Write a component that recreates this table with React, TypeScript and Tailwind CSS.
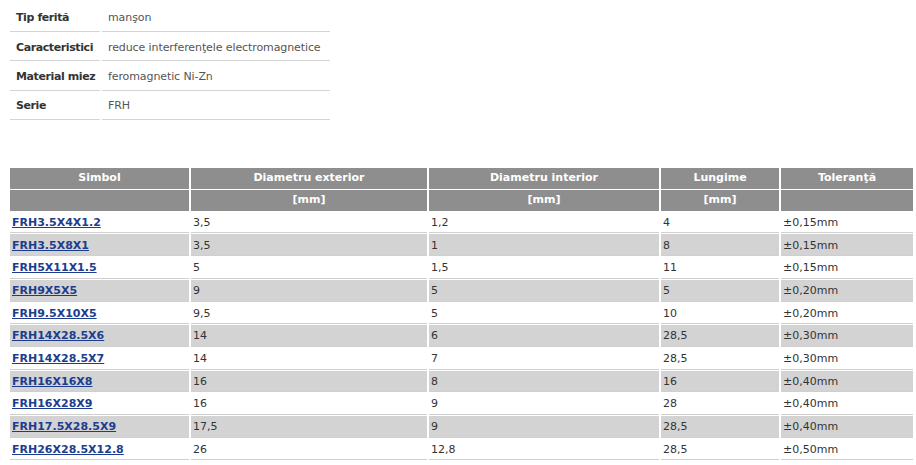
const specs = [
  { label: "Tip ferită", value: "manşon" },
  { label: "Caracteristici", value: "reduce interferenţele electromagnetice" },
  { label: "Material miez", value: "feromagnetic Ni-Zn" },
  { label: "Serie", value: "FRH" },
];

const rows = [
  ["FRH3.5X4X1.2", "3,5", "1,2", "4", "±0,15mm"],
  ["FRH3.5X8X1", "3,5", "1", "8", "±0,15mm"],
  ["FRH5X11X1.5", "5", "1,5", "11", "±0,15mm"],
  ["FRH9X5X5", "9", "5", "5", "±0,20mm"],
  ["FRH9.5X10X5", "9,5", "5", "10", "±0,20mm"],
  ["FRH14X28.5X6", "14", "6", "28,5", "±0,30mm"],
  ["FRH14X28.5X7", "14", "7", "28,5", "±0,30mm"],
  ["FRH16X16X8", "16", "8", "16", "±0,40mm"],
  ["FRH16X28X9", "16", "9", "28", "±0,40mm"],
  ["FRH17.5X28.5X9", "17,5", "9", "28,5", "±0,40mm"],
  ["FRH26X28.5X12.8", "26", "12,8", "28,5", "±0,50mm"],
];

const cols = "grid grid-cols-[179px_236px_230px_118px_132px] gap-x-[2px]";

const App = () => {
  return (
    <div className="w-[916px] h-[465px] bg-white text-[11px] text-[#333] overflow-hidden font-['DejaVu_Sans',sans-serif]">
      <div className="pt-[3px] pl-[10px]">
        <div className="grid grid-cols-[90px_228px] gap-x-[2px] w-[320px]">
          {specs.map((s) => (
            <>
              <div
                key={s.label + "-l"}
                className="h-[29.2px] flex items-center pl-[6px] pt-[3px] font-bold border-b border-[#d4d4d4] tracking-[-0.4px]"
              >
                {s.label}
              </div>
              <div
                key={s.label + "-v"}
                className="h-[29.2px] flex items-center pl-[6px] pt-[3px] text-[#555] border-b border-[#d4d4d4] tracking-[-0.1px]"
              >
                {s.value}
              </div>
            </>
          ))}
        </div>
      </div>

      <div className="mt-[48px] ml-[10px] w-[903px]">
        <div className={`${cols} bg-white font-bold text-white`}>
          <div className="h-[21px] bg-[#8e8e8e] flex items-center justify-center">Simbol</div>
          <div className="h-[21px] bg-[#8e8e8e] flex items-center justify-center">Diametru exterior</div>
          <div className="h-[21px] bg-[#8e8e8e] flex items-center justify-center">Diametru interior</div>
          <div className="h-[21px] bg-[#8e8e8e] flex items-center justify-center">Lungime</div>
          <div className="h-[21px] bg-[#8e8e8e] flex items-center justify-center">Toleranţă</div>
        </div>
        <div className={`${cols} mt-px font-bold text-white`}>
          <div className="h-[21px] bg-[#8e8e8e]"></div>
          <div className="h-[21px] bg-[#8e8e8e] flex items-center justify-center">[mm]</div>
          <div className="h-[21px] bg-[#8e8e8e] flex items-center justify-center">[mm]</div>
          <div className="h-[21px] bg-[#8e8e8e] flex items-center justify-center">[mm]</div>
          <div className="h-[21px] bg-[#8e8e8e]"></div>
        </div>
        {rows.map((r, i) => {
          const bg = i % 2 === 1 ? "bg-[#d3d3d3]" : "bg-white";
          return (
            <div key={r[0]} className={`${cols} mt-px`}>
              {r.map((c, j) => (
                <div
                  key={j}
                  className={`h-[21.7px] flex items-center pl-[2px] pt-[2px] border-b border-[#cfcfcf] ${bg}`}
                >
                  {j === 0 ? (
                    <a href="#" className="font-bold text-[#1c3d8f] underline">
                      {c}
                    </a>
                  ) : (
                    c
                  )}
                </div>
              ))}
            </div>
          );
        })}
      </div>
    </div>
  );
};

export default App;
